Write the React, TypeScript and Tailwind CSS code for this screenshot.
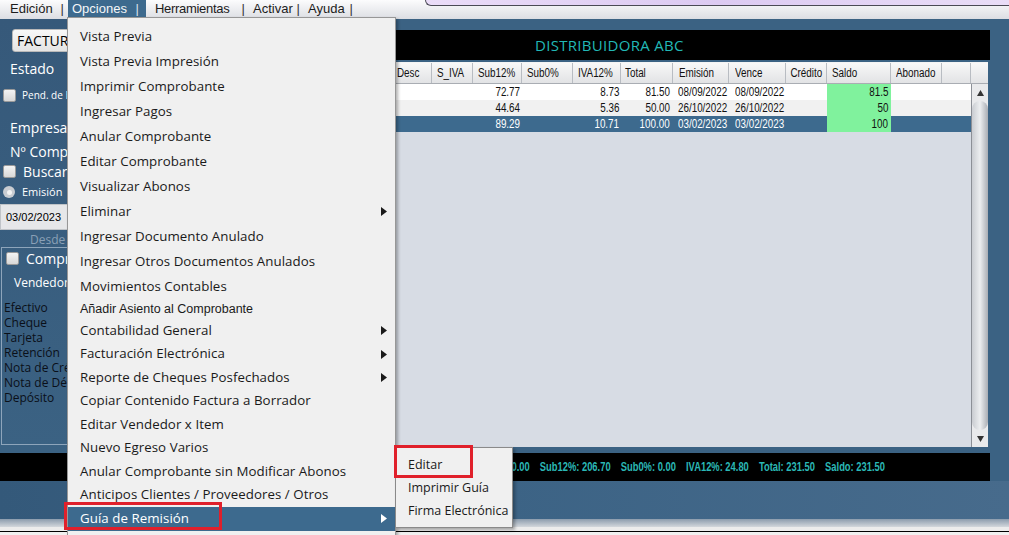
import React from "react";

const comic = "[font-family:'Open_Sans','Noto_Sans',sans-serif]";
const arial = "[font-family:'Liberation_Sans',Arial,sans-serif]";

type MenuItem = { label: string; h: string; arrow?: boolean; small?: boolean; active?: boolean };

const menuItems: MenuItem[] = [
  { label: "Vista Previa", h: "h-[25px]" },
  { label: "Vista Previa Impresión", h: "h-[25px]" },
  { label: "Imprimir Comprobante", h: "h-[25px]" },
  { label: "Ingresar Pagos", h: "h-[25px]" },
  { label: "Anular Comprobante", h: "h-[25px]" },
  { label: "Editar Comprobante", h: "h-[25px]" },
  { label: "Visualizar Abonos", h: "h-[25px]" },
  { label: "Eliminar", h: "h-[25px]", arrow: true },
  { label: "Ingresar Documento Anulado", h: "h-[25px]" },
  { label: "Ingresar Otros Documentos Anulados", h: "h-[25px]" },
  { label: "Movimientos Contables", h: "h-[25px]" },
  { label: "Añadir Asiento al Comprobante", h: "h-[20px]", small: true },
  { label: "Contabilidad General", h: "h-[23.5px]", arrow: true },
  { label: "Facturación Electrónica", h: "h-[23.5px]", arrow: true },
  { label: "Reporte de Cheques Posfechados", h: "h-[23.5px]", arrow: true },
  { label: "Copiar Contenido Factura a Borrador", h: "h-[23.5px]" },
  { label: "Editar Vendedor x Item", h: "h-[23.5px]" },
  { label: "Nuevo Egreso Varios", h: "h-[23.5px]" },
  { label: "Anular Comprobante sin Modificar Abonos", h: "h-[23.5px]" },
  { label: "Anticipos Clientes / Proveedores / Otros", h: "h-[23.5px]" },
  { label: "Guía de Remisión", h: "h-[23.5px]", arrow: true, active: true },
  { label: "Exportar Retenciones Emitidas", h: "h-[23.5px]" },
];

const columns = [
  { name: "Desc", w: "w-[37px]", align: "justify-start pl-[2px]" },
  { name: "S_IVA", w: "w-[41px]", align: "justify-start pl-[5px]" },
  { name: "Sub12%", w: "w-[49px]", align: "justify-start pl-[5px]" },
  { name: "Sub0%", w: "w-[51px]", align: "justify-start pl-[5px]" },
  { name: "IVA12%", w: "w-[48px]", align: "justify-start pl-[5px]" },
  { name: "Total", w: "w-[52px]", align: "justify-start pl-[4px]" },
  { name: "Emisión", w: "w-[56px]", align: "justify-start pl-[6px]" },
  { name: "Vence", w: "w-[57px]", align: "justify-start pl-[6px]" },
  { name: "Crédito", w: "w-[41px]", align: "justify-center" },
  { name: "Saldo", w: "w-[64px]", align: "justify-start pl-[5px]" },
  { name: "Abonado", w: "w-[51px]", align: "justify-start pl-[5px]" },
  { name: "", w: "w-[29px]", align: "justify-start" },
];

const rows = [
  { sub12: "72.77", iva: "8.73", total: "81.50", em: "08/09/2022", ve: "08/09/2022", saldo: "81.5", bg: "bg-white text-[#111]" },
  { sub12: "44.64", iva: "5.36", total: "50.00", em: "26/10/2022", ve: "26/10/2022", saldo: "50", bg: "bg-[#f1f1f1] text-[#111]" },
  { sub12: "89.29", iva: "10.71", total: "100.00", em: "03/02/2023", ve: "03/02/2023", saldo: "100", bg: "bg-[#3d6a8e] text-white" },
];

const totals = ["S_IVA: 0.00", "Sub12%: 206.70", "Sub0%: 0.00", "IVA12%: 24.80", "Total: 231.50", "Saldo: 231.50"];
const pagos = ["Efectivo", "Cheque", "Tarjeta", "Retención", "Nota de Crédito", "Nota de Débito", "Depósito"];

// texto estrecho tipo Arial Narrow: Arial comprimido horizontalmente
const NL = ({ children }: { children: React.ReactNode }) => (
  <span className="inline-block whitespace-nowrap scale-x-[0.82] origin-left">{children}</span>
);
const NR = ({ children }: { children: React.ReactNode }) => (
  <span className="inline-block whitespace-nowrap scale-x-[0.82] origin-right">{children}</span>
);
const NC = ({ children }: { children: React.ReactNode }) => (
  <span className="inline-block whitespace-nowrap scale-x-[0.82] origin-center">{children}</span>
);

const Check = () => (
  <div className="w-[13px] h-[13px] shrink-0 rounded-[2px] border border-[#9a9a9a] bg-gradient-to-b from-[#f4f4f4] to-[#d8d8d8]" />
);

const Arrow = ({ white }: { white?: boolean }) => (
  <svg width="6" height="9" viewBox="0 0 6 9" className="shrink-0">
    <path d="M0 0 L6 4.5 L0 9 Z" fill={white ? "#ffffff" : "#1a1a1a"} />
  </svg>
);

const Bar = () => <span className="text-[#333]">|</span>;

export default function App() {
  return (
    <div className="w-[1009px] h-[535px] overflow-hidden relative bg-[#3b6283]">
      {/* barra de menú */}
      <div className={`h-[19px] flex items-start bg-gradient-to-b from-[#fcfcfd] to-[#dcdee3] text-[13px] text-[#1c1c1c] ${arial}`}>
        <div className="w-[68px] h-[17px] flex items-center justify-between pl-[10px] pr-[4px]">
          <span>Edición</span>
          <Bar />
        </div>
        <div className="w-[78px] h-[17px] flex items-center justify-between pl-[4px] pr-[7px] bg-[#3d6a8e]">
          <span className="text-[#f4f6f8]">Opciones</span>
          <span className="text-[#d9e2ea]">|</span>
        </div>
        <div className="w-[102px] h-[17px] flex items-center justify-between pl-[9px] pr-[3px]">
          <span className="tracking-[-0.3px]">Herramientas</span>
          <Bar />
        </div>
        <div className="w-[55px] h-[17px] flex items-center justify-between pl-[5px] pr-[3px]">
          <span>Activar</span>
          <Bar />
        </div>
        <div className="w-[53px] h-[17px] flex items-center justify-between pl-[5px] pr-[3px]">
          <span>Ayuda</span>
          <Bar />
        </div>
        <div className="ml-[69px] flex-1 h-[6px] rounded-bl-[7px] border-b border-l border-[#4a4a55] bg-gradient-to-r from-[#eadcf8] via-[#dccaf2] to-[#e9ddf7]" />
      </div>

      {/* zona principal */}
      <div className="flex h-[431px]">
        {/* panel izquierdo */}
        <div className="w-[395px] flex flex-col bg-gradient-to-b from-[#36597a] to-[#3b6283] text-white">
          <div className="h-[10px]" />
          <div className={`ml-[12px] w-[120px] h-[23px] rounded-[3px] border border-[#b9b9b9] bg-gradient-to-b from-[#f8f8f8] to-[#e4e4e4] flex items-center pl-[4px] text-[14px] text-black ${comic}`}>
            FACTURA
          </div>
          <div className={`h-[32px] flex items-center pl-[10px] text-[14px] ${comic}`}>Estado</div>
          <div className="h-[22px] flex items-center pl-[3px] gap-[6px]">
            <Check />
            <span className={`text-[10px] ${comic}`}>Pend. de Emisión</span>
          </div>
          <div className={`mt-[10px] h-[22px] flex items-center pl-[10px] text-[14px] ${comic}`}>Empresa</div>
          <div className={`mt-[2px] h-[22px] flex items-center pl-[10px] text-[14px] ${comic}`}>Nº Comprobante</div>
          <div className="h-[18px] flex items-center pl-[3px] gap-[7px]">
            <Check />
            <span className={`text-[14px] ${comic}`}>Buscar</span>
          </div>
          <div className="mt-[3px] h-[18px] flex items-center pl-[3px] gap-[7px]">
            <div className="w-[12px] h-[12px] rounded-full bg-[#c9cdd2] flex items-center justify-center">
              <div className="w-[5px] h-[5px] rounded-full bg-[#f4f4f4]" />
            </div>
            <span className={`text-[11px] ${comic}`}>Emisión</span>
          </div>
          <div className={`mt-[3px] w-[130px] h-[26px] bg-[#e6e7e9] border border-[#c0c4c8] flex items-center pl-[5px] text-[11px] text-black ${arial}`}>
            03/02/2023
          </div>
          <div className={`mt-[2px] h-[15px] flex items-center pl-[30px] text-[12px] text-[#8aa0b6] ${comic}`}>Desde</div>
          <div className="ml-[1px] w-[300px] h-[198px] border border-[#8ea5bb] flex flex-col">
            <div className="mt-[3px] h-[14px] flex items-center pl-[4px] gap-[7px]">
              <Check />
              <span className={`text-[14px] ${comic}`}>Comprobante</span>
            </div>
            <div className="mt-[7px] h-[22px] flex items-center pl-[12px] gap-[3px]">
              <span className={`text-[12px] ${comic}`}>Vendedor</span>
              <div className="w-[80px] h-[22px] border-l-2 border-[#e8e8e8] bg-[#dfe2e6]" />
            </div>
            <div className={`mt-[6px] flex flex-col pl-[2px] text-[12px] text-[#0a0f18] ${comic}`}>
              {pagos.map((p) => (
                <div key={p} className="h-[15px] leading-[15px]">{p}</div>
              ))}
            </div>
          </div>
        </div>

        {/* área de la tabla */}
        <div className="w-[595px] flex flex-col pt-[11px]">
          <div className={`h-[30px] bg-black flex items-center pl-[140px] text-[15px] text-[#22b8b6] tracking-[0.3px] ${comic}`}>
            DISTRIBUIDORA ABC
          </div>
          <div className="h-[2px]" />
          <div className="w-[593px] h-[385px] flex bg-[#d7dce4] border-t border-[#f4f4f4]">
            <div className="w-[576px] flex flex-col">
              <div className={`h-[21px] flex border-b border-[#a9adb3] bg-gradient-to-b from-[#f8f8f8] to-[#e2e3e5] text-[12px] text-[#111] ${arial}`}>
                {columns.map((c, i) => (
                  <div key={i} className={`${c.w} h-full flex items-center border-r border-[#b8bcc2] overflow-hidden ${c.align}`}>
                    {c.name === "Crédito" ? <NC>{c.name}</NC> : <NL>{c.name}</NL>}
                  </div>
                ))}
              </div>
              {rows.map((r, i) => (
                <div key={i} className={`h-[16px] flex text-[12px] leading-[16px] ${arial} ${r.bg}`}>
                  <div className="w-[37px]" />
                  <div className="w-[41px]" />
                  <div className="w-[49px] flex justify-end pr-[2px]"><NR>{r.sub12}</NR></div>
                  <div className="w-[51px]" />
                  <div className="w-[48px] flex justify-end pr-[2px]"><NR>{r.iva}</NR></div>
                  <div className="w-[52px] flex justify-end pr-[3px]"><NR>{r.total}</NR></div>
                  <div className="w-[56px] flex pl-[5px]"><NL>{r.em}</NL></div>
                  <div className="w-[57px] flex pl-[6px]"><NL>{r.ve}</NL></div>
                  <div className="w-[41px]" />
                  <div className="w-[64px] flex justify-end pr-[3px] bg-[#80f29d] text-[#111]"><NR>{r.saldo}</NR></div>
                  <div className="w-[51px]" />
                  <div className="w-[29px]" />
                </div>
              ))}
            </div>
            <div className="w-[17px] flex flex-col">
              <div className="h-[21px] border-b border-[#a9adb3] bg-gradient-to-b from-[#f8f8f8] to-[#e2e3e5]" />
              <div className="flex-1 flex flex-col border-l border-[#8c9097] bg-[#e9eaec]">
                <div className="h-[17px] flex items-center justify-center">
                  <svg width="7" height="6" viewBox="0 0 7 6"><path d="M3.5 0 L7 6 L0 6 Z" fill="#333" /></svg>
                </div>
                <div className="flex-1 rounded-t-[8px] rounded-b-[8px] bg-gradient-to-r from-[#c9ccd1] via-[#eceef0] to-[#a9adb4]" />
                <div className="h-[17px] flex items-center justify-center">
                  <svg width="7" height="6" viewBox="0 0 7 6"><path d="M0 0 L7 0 L3.5 6 Z" fill="#333" /></svg>
                </div>
              </div>
            </div>
          </div>
        </div>
        <div className="w-[19px]" />
      </div>

      {/* barra de totales */}
      <div className="h-[3px]" />
      <div className={`w-[990px] h-[28px] bg-black flex items-center justify-end pr-[105px] text-[12px] font-bold text-[#2bb8b6] ${arial}`}>
        <div className="flex gap-[13px] whitespace-nowrap scale-x-[0.78] origin-right">
          {totals.map((t) => (
            <span key={t}>{t}</span>
          ))}
        </div>
      </div>
      <div className="h-[38px] bg-gradient-to-r from-[#34597a] via-[#3c6385] to-[#476b8c]" />
      <div className="h-[8px] bg-gradient-to-b from-[#8c9cad] to-[#d3d7dc]" />
      <div className="h-[4px] bg-[#ececec]" />
      <div className="h-[1px] bg-black" />
      <div className="h-[10px] bg-[#f0f0f0]" />

      {/* menú Opciones desplegado */}
      <div className={`absolute left-[67px] top-[17px] w-[329px] h-[540px] bg-[#f0f0f0] border border-[#979797] shadow-[2px_2px_3px_rgba(0,0,0,0.3)] pt-[6px] ${comic}`}>
        {menuItems.map((m) => (
          <div
            key={m.label}
            className={`${m.h} flex items-center justify-between pl-[12px] pr-[8px] ${m.active ? "bg-[#3d6a8e] text-white" : "text-[#1a1a1a]"}`}
          >
            <span className={m.small ? `text-[12.5px] ${arial}` : "text-[13.3px] tracking-[0.05px]"}>{m.label}</span>
            {m.arrow && <Arrow white={m.active} />}
          </div>
        ))}
      </div>
      <div className="absolute left-[64px] top-[502px] w-[158px] h-[28px] border-[3px] border-[#e0202b]" />

      {/* submenú Guía de Remisión */}
      <div className={`absolute left-[395px] top-[447px] w-[118px] h-[81px] bg-[#f0f0f0] border border-[#8a8a8a] shadow-[2px_2px_3px_rgba(0,0,0,0.3)] pt-[6px] text-[12.5px] text-[#1a1a1a] ${comic}`}>
        {["Editar", "Imprimir Guía", "Firma Electrónica"].map((s) => (
          <div key={s} className="h-[23px] flex items-center pl-[12px] whitespace-nowrap">{s}</div>
        ))}
      </div>
      <div className="absolute left-[394px] top-[445px] w-[79px] h-[33px] border-[3px] border-[#e0202b]" />
    </div>
  );
}
